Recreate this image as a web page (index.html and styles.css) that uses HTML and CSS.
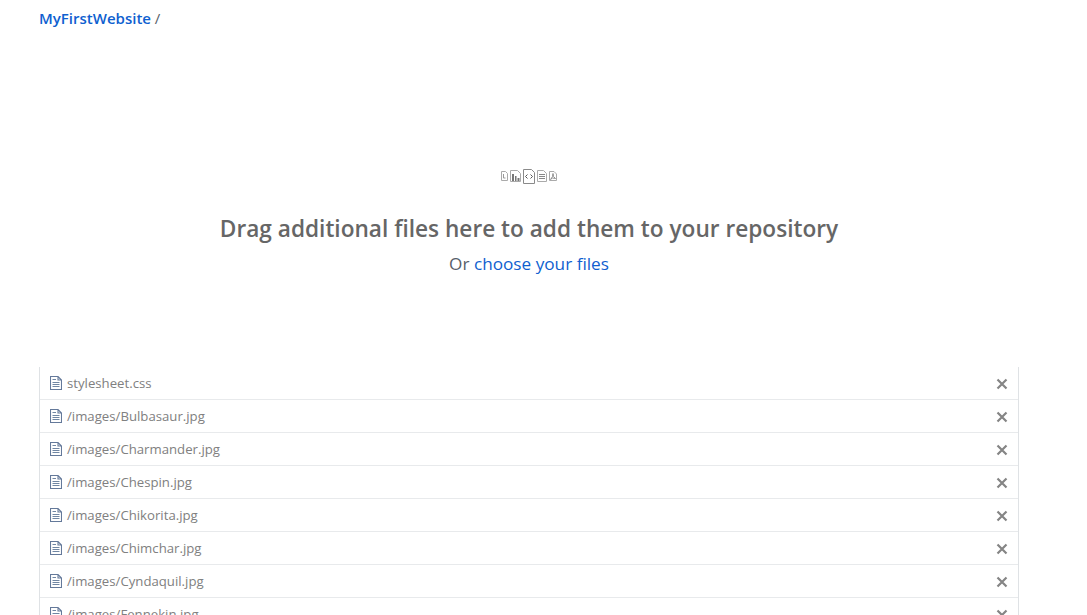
FILE: index.html
```html
<!DOCTYPE html>
<html lang="en">
<head>
    <meta charset="UTF-8">
    <title>Upload files</title>
    <link rel="stylesheet" href="styles.css">
</head>
<body>
    <div class="container">
        <div class="breadcrumb"><a href="#" class="repo">MyFirstWebsite</a> <span class="sep">/</span></div>

        <div class="dropzone">
            <div class="file-icons">
                <svg width="7" height="10" viewBox="0 0 7 10"><path d="M.5.5h4l2 2v7h-6z" fill="none" stroke="#aaa"/><path d="M2.500 3v4h2" fill="none" stroke="#999"/></svg>
                <svg width="11" height="12" viewBox="0 0 11 12"><path d="M.5 11.500v-11h7l3 3v8z" fill="none" stroke="#aaa"/><path d="M2 11v-7h2v7zM5 11v-5h1.500v5zM7.500 11v-3h2v3z" fill="#777"/></svg>
                <svg width="12" height="15" viewBox="0 0 12 15"><path d="M.5.500h8l3 3v11h-11z" fill="#fff" stroke="#8a8a8a"/><path d="M4.500 5.500l-2 2 2 2M7.500 5.500l2 2-2 2" fill="none" stroke="#555"/></svg>
                <svg width="10" height="12" viewBox="0 0 10 12"><path d="M.5.5h6l3 3v8h-9z" fill="none" stroke="#aaa"/><path d="M2 4.500h6M2 6.500h6M2 8.500h6" fill="none" stroke="#888"/></svg>
                <svg width="8" height="10" viewBox="0 0 8 10"><path d="M.5.500h4.500l2.500 2.500v6.500h-7z" fill="none" stroke="#aaa"/><path d="M1.500 8.500l2-3 .5-3 .5 3 2 2-3-.5z" fill="none" stroke="#777" stroke-width=".8"/></svg>
            </div>
            <h2>Drag additional files here to add them to your repository</h2>
            <p>Or <a href="#">choose your files</a></p>
        </div>

        <div class="file-list">
            <div class="file-row">
                <svg class="file-icon" width="12" height="14" viewBox="0 0 12 14"><use href="#file-text"/></svg>
                <span class="name">stylesheet.css</span>
                <svg class="remove" width="12" height="12" viewBox="0 0 12 12"><use href="#x"/></svg>
            </div>
            <div class="file-row">
                <svg class="file-icon" width="12" height="14" viewBox="0 0 12 14"><use href="#file-text"/></svg>
                <span class="name">/images/Bulbasaur.jpg</span>
                <svg class="remove" width="12" height="12" viewBox="0 0 12 12"><use href="#x"/></svg>
            </div>
            <div class="file-row">
                <svg class="file-icon" width="12" height="14" viewBox="0 0 12 14"><use href="#file-text"/></svg>
                <span class="name">/images/Charmander.jpg</span>
                <svg class="remove" width="12" height="12" viewBox="0 0 12 12"><use href="#x"/></svg>
            </div>
            <div class="file-row">
                <svg class="file-icon" width="12" height="14" viewBox="0 0 12 14"><use href="#file-text"/></svg>
                <span class="name">/images/Chespin.jpg</span>
                <svg class="remove" width="12" height="12" viewBox="0 0 12 12"><use href="#x"/></svg>
            </div>
            <div class="file-row">
                <svg class="file-icon" width="12" height="14" viewBox="0 0 12 14"><use href="#file-text"/></svg>
                <span class="name">/images/Chikorita.jpg</span>
                <svg class="remove" width="12" height="12" viewBox="0 0 12 12"><use href="#x"/></svg>
            </div>
            <div class="file-row">
                <svg class="file-icon" width="12" height="14" viewBox="0 0 12 14"><use href="#file-text"/></svg>
                <span class="name">/images/Chimchar.jpg</span>
                <svg class="remove" width="12" height="12" viewBox="0 0 12 12"><use href="#x"/></svg>
            </div>
            <div class="file-row">
                <svg class="file-icon" width="12" height="14" viewBox="0 0 12 14"><use href="#file-text"/></svg>
                <span class="name">/images/Cyndaquil.jpg</span>
                <svg class="remove" width="12" height="12" viewBox="0 0 12 12"><use href="#x"/></svg>
            </div>
            <div class="file-row">
                <svg class="file-icon" width="12" height="14" viewBox="0 0 12 14"><use href="#file-text"/></svg>
                <span class="name">/images/Fennekin.jpg</span>
                <svg class="remove" width="12" height="12" viewBox="0 0 12 12"><use href="#x"/></svg>
            </div>
        </div>
    </div>

    <svg class="defs" width="0" height="0">
        <symbol id="file-text" viewBox="0 0 12 14">
            <path d="M.5.500h7.500l3.500 3.500v9.500h-11z M8 .5v3.500h3.500" fill="none" stroke="#64799a" stroke-width="1.100"/>
            <path d="M2.500 3.500h3.500M2.500 6.500h7M2.500 8.500h7M2.500 10.500h7" fill="none" stroke="#7086a3"/>
        </symbol>
        <symbol id="x" viewBox="0 0 12 12">
            <path d="M1.500 1.500l9 9M10.500 1.500l-9 9" fill="none" stroke="#858585" stroke-width="2.200"/>
        </symbol>
    </svg>
</body>
</html>
```

FILE: styles.css
```css
html, body {
    height: 615px;
    overflow: hidden;
}
body {
    margin: 0;
    background: #fff;
    font-family: "Open Sans", "Noto Sans", sans-serif;
    color: #586069;
}
a {
    color: #0f5fd0;
    text-decoration: none;
}
.container {
    width: 980px;
    margin-left: 39px;
}
.breadcrumb {
    height: 37px;
    line-height: 37px;
    font-size: 15px;
}
.repo {
    font-weight: 600;
}
.dropzone {
    height: 330px;
    box-sizing: border-box;
    padding-top: 130px;
    text-align: center;
}
.file-icons {
    display: flex;
    justify-content: center;
    align-items: center;
    gap: 2px;
    height: 18px;
}
.dropzone h2 {
    margin: 28px 0 0;
    font-size: 22.65px;
    line-height: 32px;
    font-weight: 600;
    color: #666;
}
.dropzone p {
    margin: 7px 0 0;
    font-size: 17.2px;
    line-height: 24px;
}
.file-list {
    border: 1px solid #dfe2e5;
    border-width: 0 1px;
}
.file-row {
    display: flex;
    align-items: center;
    height: 32px;
    padding: 0 10px;
    border-bottom: 1px solid #e8eaec;
    font-size: 13.2px;
    color: #808080;
}
.file-icon {
    margin-right: 5px;
}
.name {
    flex: 1;
}
.remove {
    margin-top: 2px;
}
.defs {
    position: absolute;
}
```
